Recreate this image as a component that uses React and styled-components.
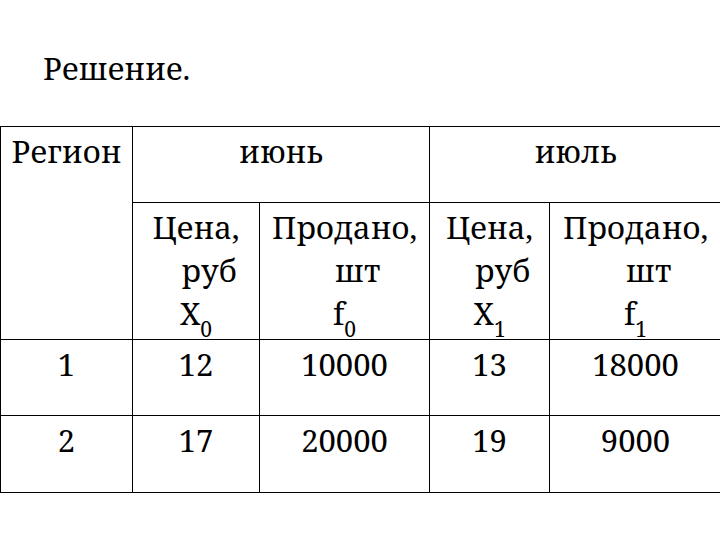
import styled, { createGlobalStyle } from "styled-components"

const GlobalStyle = createGlobalStyle`
  html, body {
    margin: 0;
    padding: 0;
    background: #fff;
  }
  body {
    width: 720px;
    height: 540px;
    overflow: hidden;
    font-family: "Noto Serif", "DejaVu Serif", serif;
    color: #000;
  }
`

const Page = styled.div`
  width: 720px;
  height: 540px;
  padding-top: 47px;
  box-sizing: border-box;
`

const Title = styled.div`
  font-size: 31px;
  line-height: 43px;
  margin: 0 0 36px 43px;
`

const Table = styled.table`
  border-collapse: collapse;
  table-layout: fixed;
  width: 722px;
  font-family: "Noto Serif", "DejaVu Serif", serif;
  font-size: 31px;
  line-height: 43px;
`

const Cell = styled.td`
  border: 1px solid #000;
  padding: 3px 0 0;
  vertical-align: top;
  text-align: center;
  height: ${(props) => props.h}px;
  box-sizing: border-box;
  white-space: nowrap;
`

const Line = styled.div`
  padding-left: ${(props) => props.shift || 0}px;
`

const Sub = styled.sub`
  font-size: 21px;
  line-height: 0;
  vertical-align: -12px;
`

const columns = [132, 127, 170, 120, 172]

const subHeads = [
  { top: "Цена,", unit: "руб", sym: "X", idx: "0" },
  { top: "Продано,", unit: "шт", sym: "f", idx: "0" },
  { top: "Цена,", unit: "руб", sym: "X", idx: "1" },
  { top: "Продано,", unit: "шт", sym: "f", idx: "1" },
]

const rows = [
  ["1", "12", "10000", "13", "18000"],
  ["2", "17", "20000", "19", "9000"],
]

export default function App() {
  return (
    <>
      <GlobalStyle />
      <Page>
        <Title>Решение.</Title>
        <Table>
          <colgroup>
            {columns.map((w, i) => (
              <col key={i} style={{ width: w }} />
            ))}
          </colgroup>
          <tbody>
            <tr>
              <Cell rowSpan={2}>Регион</Cell>
              <Cell colSpan={2} h={76}>
                июнь
              </Cell>
              <Cell colSpan={2} h={76}>
                июль
              </Cell>
            </tr>
            <tr>
              {subHeads.map((s, i) => (
                <Cell key={i} h={137}>
                  <Line>{s.top}</Line>
                  <Line shift={26}>{s.unit}</Line>
                  <Line>
                    {s.sym}
                    <Sub>{s.idx}</Sub>
                  </Line>
                </Cell>
              ))}
            </tr>
            {rows.map((r, i) => (
              <tr key={i}>
                {r.map((v, j) => (
                  <Cell key={j} h={i === 0 ? 76 : 77}>
                    {v}
                  </Cell>
                ))}
              </tr>
            ))}
          </tbody>
        </Table>
      </Page>
    </>
  )
}
